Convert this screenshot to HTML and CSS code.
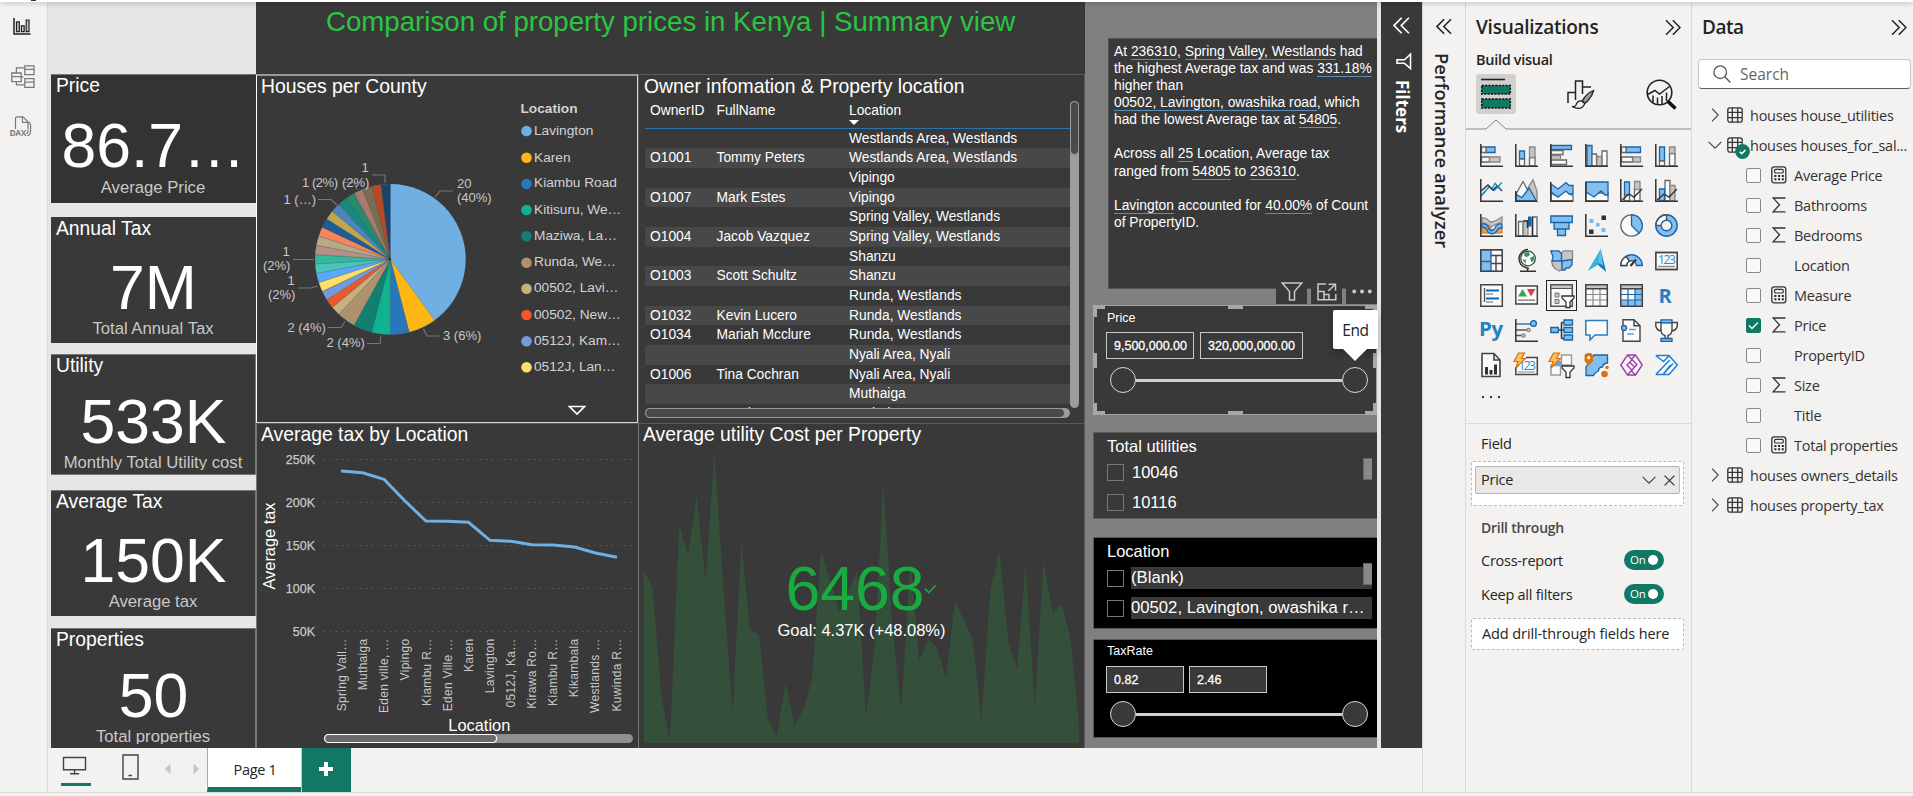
FILE: index.html
```html
<!DOCTYPE html>
<html lang="en">
<head>
<meta charset="utf-8">
<title>Property prices in Kenya</title>
<link rel="stylesheet" href="styles.css">
</head>
<body>
<svg class="defs" width="0" height="0">
  <symbol id="chev-r" viewBox="0 0 8 14"><path d="M1 .7 7.2 7 1 13.3" fill="none" stroke="#444" stroke-width="1.1"/></symbol>
  <symbol id="chev-d" viewBox="0 0 14 8"><path d="M.6 .8 7 7.2 13.4 .8" fill="none" stroke="#444" stroke-width="1.1"/></symbol>
  <symbol id="dbl-r" viewBox="0 0 16 16"><path d="M1 .7 8.2 8 1 15.3M7.8 .7 15 8 7.8 15.3" fill="none" stroke="currentColor" stroke-width="1.5"/></symbol>
  <symbol id="dbl-l" viewBox="0 0 16 16"><path d="M8.2 .7 1 8l7.2 7.3M15 .7 7.8 8l7.2 7.3" fill="none" stroke="currentColor" stroke-width="1.6"/></symbol>
  <symbol id="tbl" viewBox="0 0 16 16"><path d="M3 .8h10a2.2 2.2 0 0 1 2.2 2.2v10a2.2 2.2 0 0 1-2.2 2.2H3A2.2 2.2 0 0 1 .8 13V3A2.2 2.2 0 0 1 3 .8zM5.3 .8v14.4M10.7 .8v14.4M.8 5.3h14.4M.8 10.7h14.4" fill="none" stroke="#333" stroke-width="1.3"/></symbol>
  <symbol id="calc" viewBox="0 0 16 18"><rect x=".8" y=".8" width="14" height="16" rx="2.4" fill="none" stroke="#333" stroke-width="1.3"/><rect x="3.6" y="3.4" width="8.6" height="3.6" rx="1" fill="none" stroke="#333" stroke-width="1.2"/><path d="M3.4 10h9.4M3.4 13.2h9.4" stroke="#222" stroke-width="1.9" stroke-dasharray="2 1.7"/></symbol>
  <symbol id="sigma" viewBox="0 0 14 16"><path d="M13.5 1H1.2l6.3 6.8L1.2 14.9h12.3" fill="none" stroke="#333" stroke-width="1.3"/></symbol>
  <defs>
    <path id="w1" d="M0 0V-75.3A75.3 75.3 0 0 1 9.44 -74.71z"/>
    <path id="w2" d="M0 0V-75.3A75.3 75.3 0 0 1 18.73 -72.93z"/>
    <path id="w3" d="M0 0V-75.3A75.3 75.3 0 0 1 27.72 -70.01z"/>
  </defs>
</svg>

<div class="top-strip"><i></i></div>
<div class="app">
  <nav class="rail">
    <svg width="18" height="18" viewBox="0 0 18 18"><path d="M1 0v16h16.5" fill="none" stroke="#222" stroke-width="1.5"/><path d="M3.5 3.8h2.8v9.9H3.5zM8.4 7.8h2.8v5.9H8.4zM13.2 2h2.8v11.7h-2.8z" fill="#c8c6c4" stroke="#222" stroke-width="1.2"/></svg>
    <svg width="24" height="24" viewBox="0 0 24 24"><path d="M.8 8h9.4v8.6H.8zM.8 11.6h9.4M13.8 .8h9.2v8.8h-9.2zM13.8 4.4h9.2M13.8 13.6h9.2v8.8h-9.2zM13.8 17.2h9.2M5.4 8V2.8h8.4M10.2 12h2M5.4 16.6v3.2h8.4" fill="none" stroke="#7d7b79" stroke-width="1.3"/></svg>
    <svg width="22" height="22" viewBox="0 0 22 22"><path d="M5.5 13V2.4Q5.5 .8 7 .8h6l5 5V15q0 3-2.6 3M12.4 .8v5.6h5.4M18.8 6q1.8 1.2 1.8 3.4v5.8q0 4-3.6 4.6" fill="none" stroke="#7d7b79" stroke-width="1.2"/><text x="-.5" y="20.4" font-size="8.6" font-weight="700" fill="#7d7b79" font-family="Open Sans, sans-serif" textLength="17" stroke="#f3f2f1" stroke-width="1.6" paint-order="stroke">DAX</text></svg>
  </nav>

  <div class="center">
    <div class="report">
      <section class="cards">
        <article class="card price"><h3>Price</h3><b>86.7…</b><span>Average Price</span></article>
        <article class="card annual"><h3>Annual Tax</h3><b>7M</b><span>Total Annual Tax</span></article>
        <article class="card utility"><h3>Utility</h3><b>533K</b><span>Monthly Total Utility cost</span></article>
        <article class="card avgtax"><h3>Average Tax</h3><b>150K</b><span>Average tax</span></article>
        <article class="card props"><h3>Properties</h3><b>50</b><span>Total properties</span></article>
      </section>

      <section class="main">
        <h1>Comparison of property prices in Kenya | Summary view</h1>
        <div class="panel houses">
          <h2>Houses per County</h2>
          <svg width="380" height="324" viewBox="257 98 380 324">
            <g class="pie" transform="translate(390.4 259.3)">
              <circle r="75.3" fill="#6fafe1"/>
              <use href="#w3" fill="#fdb714" transform="rotate(144)"/>
              <use href="#w2" fill="#2777bd" transform="rotate(165.6)"/>
              <use href="#w2" fill="#11b292" transform="rotate(180)"/>
              <use href="#w2" fill="#128070" transform="rotate(194.4)"/>
              <use href="#w2" fill="#ae916f" transform="rotate(208.8)"/>
              <use href="#w1" fill="#c4b17c" transform="rotate(223.2)"/>
              <use href="#w1" fill="#f15829" transform="rotate(230.4)"/>
              <use href="#w1" fill="#739cd8" transform="rotate(237.6)"/>
              <use href="#w1" fill="#ffe066" transform="rotate(244.8)"/>
              <use href="#w1" fill="#5ca8ff" transform="rotate(252)"/>
              <use href="#w1" fill="#4ac5bb" transform="rotate(259.2)"/>
              <use href="#w1" fill="#35b899" transform="rotate(266.4)"/>
              <use href="#w1" fill="#b59088" transform="rotate(273.6)"/>
              <use href="#w1" fill="#b8a888" transform="rotate(280.8)"/>
              <use href="#w1" fill="#f5865b" transform="rotate(288)"/>
              <use href="#w1" fill="#1d5c96" transform="rotate(295.2)"/>
              <use href="#w1" fill="#bea64f" transform="rotate(302.4)"/>
              <use href="#w1" fill="#4d84c0" transform="rotate(309.6)"/>
              <use href="#w1" fill="#18897f" transform="rotate(316.8)"/>
              <use href="#w1" fill="#2a8a6b" transform="rotate(324)"/>
              <use href="#w1" fill="#a97a6c" transform="rotate(331.2)"/>
              <use href="#w1" fill="#7a6c4f" transform="rotate(338.4)"/>
              <use href="#w1" fill="#b54a27" transform="rotate(345.6)"/>
              <use href="#w1" fill="#1a446c" transform="rotate(352.8)"/>
            </g>
            <g class="leader">
              <path d="M435 197.500l5-6.500h13M372 175h13v8M342 182.500h12l3 7M318 199.500h13l6 5.500M293 259.500h21M298 288h13l7-2M328 327.500h13l4-6M367 343.500h13l1-8M423.500 329l3.500 7h13"/>
            </g>
            <g class="lbl">
              <text x="457" y="188">20</text><text x="457" y="202">(40%)</text>
              <text x="361.500" y="172">1</text><text x="342" y="186.500">(2%)</text>
              <text x="302" y="187" textLength="36">1 (2%)</text><text x="283.500" y="203.500">1 (…)</text>
              <text x="282.500" y="256">1</text><text x="263" y="270">(2%)</text>
              <text x="287.500" y="285">1</text><text x="268" y="299">(2%)</text>
              <text x="287.500" y="332">2 (4%)</text><text x="326.500" y="347">2 (4%)</text><text x="443" y="340">3 (6%)</text>
            </g>
            <g class="legend">
              <text x="520.500" y="112.500" font-weight="700">Location</text>
              <circle cx="526.500" cy="131" r="5.300" fill="#6fafe1"/><text x="534" y="135">Lavington</text>
              <circle cx="526.500" cy="157.700" r="5.300" fill="#fdb714"/><text x="534" y="162">Karen</text>
              <circle cx="526.500" cy="184" r="5.300" fill="#2777bd"/><text x="534" y="187">Kiambu Road</text>
              <circle cx="526.500" cy="210" r="5.300" fill="#11b292"/><text x="534" y="214">Kitisuru, We…</text>
              <circle cx="526.500" cy="236.300" r="5.300" fill="#128070"/><text x="534" y="240">Maziwa, La…</text>
              <circle cx="526.500" cy="262.700" r="5.300" fill="#ae916f"/><text x="534" y="266">Runda, We…</text>
              <circle cx="526.500" cy="288.700" r="5.300" fill="#c4b17c"/><text x="534" y="292">00502, Lavi…</text>
              <circle cx="526.500" cy="315" r="5.300" fill="#f15829"/><text x="534" y="319">00502, New…</text>
              <circle cx="526.500" cy="341.300" r="5.300" fill="#739cd8"/><text x="534" y="345">0512J, Kam…</text>
              <circle cx="526.500" cy="367.300" r="5.300" fill="#ffe066"/><text x="534" y="371">0512J, Lan…</text>
            </g>
            <path d="M569.500 406.500h15l-7.500 7.500z" fill="none" stroke="#fff" stroke-width="1.700"/>
          </svg>
        </div>

        <div class="panel owners">
          <h2>Owner infomation &amp; Property location</h2>
          <div class="grid-wrap">
            <div class="tview">
              <div class="tr th"><span>OwnerID</span><span>FullName</span><span>Location<i class="sort"></i></span></div>
              <div class="tr"><span></span><span></span><span>Westlands Area, Westlands</span></div>
              <div class="tr alt"><span>O1001</span><span>Tommy Peters</span><span>Westlands Area, Westlands</span></div>
              <div class="tr"><span></span><span></span><span>Vipingo</span></div>
              <div class="tr alt"><span>O1007</span><span>Mark Estes</span><span>Vipingo</span></div>
              <div class="tr"><span></span><span></span><span>Spring Valley, Westlands</span></div>
              <div class="tr alt"><span>O1004</span><span>Jacob Vazquez</span><span>Spring Valley, Westlands</span></div>
              <div class="tr"><span></span><span></span><span>Shanzu</span></div>
              <div class="tr alt"><span>O1003</span><span>Scott Schultz</span><span>Shanzu</span></div>
              <div class="tr"><span></span><span></span><span>Runda, Westlands</span></div>
              <div class="tr alt"><span>O1032</span><span>Kevin Lucero</span><span>Runda, Westlands</span></div>
              <div class="tr"><span>O1034</span><span>Mariah Mcclure</span><span>Runda, Westlands</span></div>
              <div class="tr alt"><span></span><span></span><span>Nyali Area, Nyali</span></div>
              <div class="tr"><span>O1006</span><span>Tina Cochran</span><span>Nyali Area, Nyali</span></div>
              <div class="tr alt"><span></span><span></span><span>Muthaiga</span></div>
              <div class="tr"><span>O1030</span><span>Jared</span><span>Muthaiga</span></div>
            </div>
            <div class="vscroll"><i></i></div>
            <div class="hscroll"><i></i></div>
          </div>
        </div>

        <div class="panel linechart">
          <h2>Average tax by Location</h2>
          <svg width="381" height="300" viewBox="257 448 381 300">
            <path class="dots" d="M324 459.500h309M324 502.500h309M324 545.500h309M324 588.500h309M324 631.500h309"/>
            <g class="ylab" text-anchor="end">
              <text x="315" y="464">250K</text><text x="315" y="507">200K</text><text x="315" y="550">150K</text><text x="315" y="593">100K</text><text x="315" y="636">50K</text>
            </g>
            <polyline points="341,471 362.500,472.700 384,479.300 405,501 426,521 447.500,521.300 468.500,522.300 490,540.300 511,541.300 532,544.700 553,545 574.500,547 595.500,553 617,557.300" fill="none" stroke="#6fafe1" stroke-width="3"/>
            <g class="xlab" text-anchor="end">
              <text transform="translate(346 638.500) rotate(-90)">Spring Vall…</text>
              <text transform="translate(367 638.500) rotate(-90)">Muthaiga</text>
              <text transform="translate(388 638.500) rotate(-90)">Eden ville, …</text>
              <text transform="translate(409 638.500) rotate(-90)">Vipingo</text>
              <text transform="translate(431 638.500) rotate(-90)">Kiambu R…</text>
              <text transform="translate(452 638.500) rotate(-90)">Eden Ville …</text>
              <text transform="translate(473 638.500) rotate(-90)">Karen</text>
              <text transform="translate(494 638.500) rotate(-90)">Lavington</text>
              <text transform="translate(515 638.500) rotate(-90)">0512J, Ka…</text>
              <text transform="translate(536 638.500) rotate(-90)">Kirawa Ro…</text>
              <text transform="translate(557 638.500) rotate(-90)">Kiambu R…</text>
              <text transform="translate(578 638.500) rotate(-90)">Kikambala</text>
              <text transform="translate(599 638.500) rotate(-90)">Westlands …</text>
              <text transform="translate(621 638.500) rotate(-90)">Kuwinda R…</text>
            </g>
            <g class="axis-title" text-anchor="middle">
              <text x="479.300" y="730.500" textLength="62">Location</text>
              <text transform="translate(274.500 546) rotate(-90)" textLength="87">Average tax</text>
            </g>
            <rect x="324" y="734" width="309" height="9" rx="4.500" fill="#8f8f8f"/>
            <rect x="324.600" y="734.500" width="172" height="8" rx="4" fill="#6a6a6a" stroke="#fff" stroke-width="1.200"/>
          </svg>
        </div>

        <div class="panel kpi">
          <h2>Average utility Cost per Property</h2>
          <svg width="445" height="300" viewBox="639 448 445 300">
            <polygon transform="translate(640 420) scale(.33333)" fill="#34503a" points="11,453 38,502 64,830 90,966 118,312 144,408 170,228 197,485 223,95 250,500 278,882 304,362 330,631 357,645 384,898 410,947 437,788 464,916 491,867 517,772 543,390 570,480 598,575 625,520 651,450 678,890 704,680 730,185 757,620 784,872 811,415 838,722 865,657 891,682 918,776 945,545 971,598 998,658 1024,902 1051,512 1078,395 1105,665 1131,748 1157,428 1184,857 1211,425 1238,578 1265,552 1291,655 1317,915 1317,969 11,969"/>
            <text x="785.500" y="610" font-size="62.500" fill="#1aab40" textLength="139">6468</text>
            <path d="M925 588.500l3.600 4 7.400-7.200" fill="none" stroke="#1aab40" stroke-width="1.600"/>
            <text x="777.500" y="636" font-size="16.500" fill="#fff" textLength="168">Goal: 4.37K (+48.08%)</text>
          </svg>
        </div>
      </section>

      <section class="side">
        <div class="story">
          <p>At <u>236310</u>, <u>Spring Valley, Westlands</u> had<br>the highest Average tax and was <u>331.18%</u><br>higher than<br><u>00502, Lavington, owashika road</u>, which<br>had the lowest Average tax at <u>54805</u>.</p>
          <p>Across all <u>25</u> Location, Average tax<br>ranged from <u>54805</u> to <u>236310</u>.</p>
          <p><u>Lavington</u> accounted for <u>40.00%</u> of Count<br>of PropertyID.</p>
        </div>
        <div class="slicer price-slicer">
          <div class="actions">
            <span><svg width="22" height="20" viewBox="0 0 22 20"><path d="M1.200 1h19.600l-7.300 8.500V18h-5V9.500z" fill="none" stroke="#c8c8c8" stroke-width="1.500"/></svg></span>
            <span><svg width="20" height="18" viewBox="0 0 20 18"><path d="M9 1H1v15.800h17.800V11M11.500 1.200h7v6.600M18.300 1.200l-7 6.800M1 8.500h6v8.300M7 11.500h5v5.300" fill="none" stroke="#c8c8c8" stroke-width="1.500"/></svg></span>
            <span><svg width="20" height="5" viewBox="0 0 20 5"><path d="M2.200 2.500h.01M10 2.500h.01M17.800 2.500h.01" stroke="#c8c8c8" stroke-width="4" stroke-linecap="round"/></svg></span>
          </div>
          <i class="h tl"></i><i class="h tm"></i><i class="h tr2"></i><i class="h ml"></i><i class="h mr"></i><i class="h bl"></i><i class="h bm"></i><i class="h br"></i>
          <h4>Price</h4>
          <div class="inputs"><span class="w88">9,500,000.00</span><span class="w102">320,000,000.00</span></div>
          <div class="slider"><i></i><em></em><i></i></div>
          <div class="tip">End</div>
        </div>
        <div class="slicer list util">
          <h5>Total utilities</h5>
          <div class="opt"><i></i><span>10046</span></div>
          <div class="opt"><i></i><span>10116</span></div>
          <b class="thumb"></b>
        </div>
        <div class="slicer list loc">
          <h5>Location</h5>
          <div class="opt"><i></i><span>(Blank)</span></div>
          <div class="opt"><i></i><span>00502, Lavington, owashika r…</span></div>
          <b class="thumb"></b>
        </div>
        <div class="slicer rate">
          <h4>TaxRate</h4>
          <div class="inputs"><span class="w78">0.82</span><span class="w78">2.46</span></div>
          <div class="slider"><i></i><em></em><i></i></div>
        </div>
      </section>

      <aside class="filters">
        <svg width="17" height="17"><use href="#dbl-l"/></svg>
        <svg class="fun" width="16" height="17" viewBox="0 0 16 17"><path d="M14.500 1.200v14.300L8.500 10.300H1V6.800h7.500z" fill="none" stroke="#fff" stroke-width="1.600"/></svg>
        <span>Filters</span>
      </aside>
    </div>

    <footer class="pages">
      <div class="ic desk"><svg width="26" height="20" viewBox="0 0 26 20"><path d="M1.500 1.500h22v12.300h-22zM12.500 14v3.500M8 17.700h9" fill="none" stroke="#444" stroke-width="1.400"/></svg></div>
      <svg class="ic phone" width="17" height="26" viewBox="0 0 17 26"><path d="M1 1h15v24H1zM6.500 21.500h3.500" fill="none" stroke="#444" stroke-width="1.400"/></svg>
      <svg class="ic prev" width="7" height="12" viewBox="0 0 7 12"><path d="M6.500 .5v11L.8 6z" fill="#c8c6c4"/></svg>
      <svg class="ic next" width="7" height="12" viewBox="0 0 7 12"><path d="M.5 .5v11L6.200 6z" fill="#c8c6c4"/></svg>
      <div class="tab">Page 1</div>
      <div class="plus"><svg width="14" height="14" viewBox="0 0 14 14"><path d="M7 0v14M0 7h14" stroke="#fff" stroke-width="4"/></svg></div>
    </footer>
  </div>

  <aside class="perf"><svg width="16" height="17"><use href="#dbl-l"/></svg><span>Performance analyzer</span></aside>

  <aside class="viz">
    <header><h2>Visualizations</h2><svg width="16" height="17"><use href="#dbl-r"/></svg></header>
    <h3>Build visual</h3>
    <div class="modes">
      <div class="mode on"><svg width="32" height="32" viewBox="0 0 32 32"><path d="M1 1.500h24" stroke="#222" stroke-width="1.600"/><path d="M1.700 7.500h28.600v8.600H1.700zM1.700 21h28.600v9H1.700z" fill="#117865" stroke="#111" stroke-width="1.500" stroke-dasharray="2.200 1.200"/></svg></div>
      <svg width="28" height="30" viewBox="0 0 28 30"><path d="M1 24V13.500h7.500M8.500 20V2h7v13M15.500 8h8.500M8.500 13v8" fill="none" stroke="#222" stroke-width="1.500"/><path d="M26.600 11.500q-5.600 2-9.600 7.600l-1.800 3 2.600 2.200 3-2.400q4.400-4.600 5.800-10.400z" fill="#999" stroke="#222" stroke-width="1.300"/><path d="M14.500 22q-4-.5-5.500 4-1 2-4 1.500 6.500 3.500 10.500.5 2.400-1.800 2-3.800z" fill="#f3f2f1" stroke="#222" stroke-width="1.300"/></svg>
      <svg width="31" height="31" viewBox="0 0 31 31"><circle cx="13.500" cy="13.500" r="12.300" fill="none" stroke="#222" stroke-width="1.600"/><path d="M1.500 15.500 9 11.500l4.500 3.500 10-7.500M7 16.500v7M11.500 18.500v7M16 17v8M20.500 13.500v8.500" fill="none" stroke="#222" stroke-width="1.500"/><path d="m21.500 22 8 7.500" stroke="#111" stroke-width="3.600"/></svg>
    </div>
    <svg class="notch" width="225" height="11" viewBox="0 0 225 11"><path d="M0 10h20L30 1l10 9h185" fill="none" stroke="#8a8886" stroke-width="1"/></svg>

    <div class="icons">
      <svg viewBox="0 0 23 23"><path class="b" d="M6 3h9v5.500H6z"/><path class="w" d="M1.500 3H6v5.500H1.500zM1.500 13h8v5h-8z"/><path class="g" d="M9.500 13H20v5H9.500z"/><path class="ax" d="M.8 0v22.200H23"/></svg>
      <svg viewBox="0 0 23 23"><path class="b" d="M4.500 7h5v8h-5z"/><path class="w" d="M4.500 15h5v7h-5zM14.500 13.500h5.500V22h-5.500z"/><path class="g" d="M14.500 3h5.500v10.500h-5.500z"/><path class="ax" d="M.8 0v22.200H23"/></svg>
      <svg viewBox="0 0 23 23"><path class="b" d="M1 1.500h20.500v4H1z"/><path class="w" d="M1 6.500h12v4H1zM1 16h15.500v4.500H1z"/><path class="g" d="M1 11.500h9.500v4H1z"/><path class="ax" d="M.8 0v22.200H23"/></svg>
      <svg viewBox="0 0 23 23"><path class="b" d="M2 1.500h5V22H2z"/><path class="w" d="M7 10h4.500v12H7zM17 7h5v15h-5z"/><path class="g" d="M12 12.500h4.500V22H12z"/><path class="ax" d="M.8 0v22.200H23"/></svg>
      <svg viewBox="0 0 23 23"><path class="b" d="M6 3h14.500v5.500H6z"/><path class="w" d="M1.500 3H6v5.500H1.500zM1.500 13h11v5h-11z"/><path class="g" d="M13 13h7.500v5H13z"/><path class="ax" d="M.8 0v22.200H23"/></svg>
      <svg viewBox="0 0 23 23"><path class="b" d="M4.500 3h5v14h-5z"/><path class="w" d="M4.500 17h5v5h-5zM14.500 9.500h5.500V22h-5.500z"/><path class="g" d="M14.500 3h5.500v6.500h-5.500z"/><path class="ax" d="M.8 0v22.200H23"/></svg>

      <svg viewBox="0 0 23 23"><path d="M1 17 9 8l5 3.500 8-8" class="l" stroke="#1e8bcd"/><path d="m1 12 7-6 5 5 4-4 5 5" class="l" stroke="#333"/><path d="m1 17 5-5.500M12 9.500 15 4.500l7 7" class="l" stroke="#1e8bcd"/><path class="ax" d="M.8 0v22.200H23"/></svg>
      <svg viewBox="0 0 23 23"><path class="g" d="M11 12 18 .8 22 12v10.500z"/><path class="w" d="M1 15 8 2.500l5 9.500-6 8z"/><path class="b" d="M1 22v-6.500l6 3 7-9.500 7.500 13z"/><path class="ax" d="M.8 12v10.200H22"/></svg>
      <svg viewBox="0 0 23 23"><path class="w" d="M1 22v-8l7 4 7-7 8 6v5z"/><path class="b" d="m1 5 7 5 8-6.500 3 3h4v8.500h-4l-3-3-8 6-7-5z"/><path class="ax" d="M.8 3v19.200H23"/></svg>
      <svg viewBox="0 0 23 23"><path class="w" d="M1 22v-8h22v8z"/><path class="b" d="M1 3h22v13h-3l-4-4-7 6-8-5z"/><path class="ax" d="M.8 3v19.200H23"/></svg>
      <svg viewBox="0 0 23 23"><path class="b" d="M4.500 3h5v13h-5z"/><path class="w" d="M4.500 16h5v6h-5zM14.500 9.500h5.500V22h-5.500z"/><path class="g" d="M14.500 2.500h5.500v8h-5.500z"/><path d="m2 21 7-6 5 3 8-8" class="l" stroke="#333"/><path class="ax" d="M.8 0v22.200H23"/></svg>
      <svg viewBox="0 0 23 23"><path class="w" d="M10 1.500h5V22h-5z"/><path class="g" d="M15 6.500h5V22h-5z"/><path class="b" d="M4.500 10h5v12h-5z"/><path d="m2 21 7-6 5 3 8-8" class="l" stroke="#333"/><path class="ax" d="M.8 0v22.200H23"/></svg>

      <svg viewBox="0 0 23 23"><path d="M2 4q4-1 8 4 5 0 12-5v5q-6 2-11 5-5-4-9-4z" class="g"/><path d="M2 12q6-3 9 3 4 2 11-2v6H2z" fill="#f0a04b" stroke="#d66f0b"/><path d="M2 10q5-1 7 5 3 4 6-1 2-5 7-4v4q-4-1-5 3-5 5-9 1-2-5-6-5z" class="b"/><path class="ax" d="M.8 0v22.200H23"/></svg>
      <svg viewBox="0 0 23 23"><path class="w" d="M3.500 7.500h4.500V22H3.500zM17.500 3h4.500v19h-4.500z"/><path class="g" d="M8.500 7h4.500v15H8.500z"/><path d="M13 2.500h3.500v10H13z" fill="#1565a8"/><path class="ax" d="M.8 0v22.200H23M8.500 7h4v7M17.500 3v19"/></svg>
      <svg viewBox="0 0 23 23"><path class="b" d="M.8 2h21.500v6.500H.8zM4 8.500h15v6.500H4zM7.500 15h8v6.500h-8z"/></svg>
      <svg viewBox="0 0 23 23"><path d="M16.500 1.500H21V6h-4.500zM4 15.500h4.500V20H4z" fill="#333"/><path d="M4.500 5h4v4h-4zM11 9h3.500v3.500H11zM16.500 14h4v4h-4z" fill="#7ab8e8"/><path class="ax" d="M.8 0v22.200H23"/></svg>
      <svg viewBox="0 0 23 23"><circle cx="11.500" cy="11.500" r="10.700" class="w"/><path class="b" d="M11.500 .8a10.700 10.700 0 0 1 7.500 18.300l-7.500-7.600z"/></svg>
      <svg viewBox="0 0 23 23"><circle cx="11.500" cy="11.500" r="8" fill="none" stroke="#85bdec" stroke-width="5.500"/><path d="M3.500 11.500a8 8 0 0 1 8-8" fill="none" stroke="#fafafa" stroke-width="5"/><circle cx="11.500" cy="11.500" r="10.700" class="l" stroke="#1765ab"/><circle cx="11.500" cy="11.500" r="5.300" class="l" stroke="#1765ab"/><path d="M.8 11.500A10.700 10.700 0 0 1 11.500 .8v5.400M.8 11.500h5.500" class="l" stroke="#555"/></svg>

      <svg viewBox="0 0 23 23"><path class="w" d="M.8 .8h21.500v21.500H.8z"/><path class="b" d="M.8 .8H11v21.500H.8zM.8 12.500H11"/><path class="l" stroke="#444" d="M11 6.500h11M16 6.500v15.700M16 14.500h6M11 14.500h5M.8 .8h21.500v21.500H.8z"/></svg>
      <svg viewBox="0 0 23 23"><circle cx="13" cy="9.500" r="7.300" fill="#fff" stroke="#444" stroke-width="1.300"/><path d="M10 3.500l4-.5 1 3-3 2-3-1zM15 9l4-2v4l-2.500 2.500zM7 10l4 1-.500 4z" fill="#2f9a55"/><path class="ax" d="M13 .5a9.500 9.500 0 0 0-9 9.500q.500 8 10 9.500M12.500 18.500v3.500M5 22.200h16"/></svg>
      <svg viewBox="0 0 23 23"><path class="g" d="M11.500 3.500 14 1.800h8.500V10l-4 2h-7zM2 12h9.500l1 8-3 2-4.500-2.500q-3.500-3-3-7.500z"/><path class="b" d="M.8 1.800h8l2.700 3v7H2l1-4zM12 12l10-1.500V16l-3 3h-3l-1 2h-3z"/></svg>
      <svg viewBox="0 0 23 25"><path d="M16 0 2 24l11-7z" fill="#3bb0dd"/><path d="m16 0-3 17 9 8z" fill="#1077c9"/><path d="m16 0 3 18-6-3z" fill="#5bc3e6"/></svg>
      <svg viewBox="0 0 23 23"><path d="M.8 16.500a10.700 10.700 0 0 1 21.500 0h-6a4.700 4.700 0 0 0-9.500 0z" fill="#85bdec" stroke="#1765ab" stroke-width="1.400"/><path d="M.8 16.500q0-6 5.500-9l3 4.500q-2.500 1.500-2.500 4.500z" fill="#fff" stroke="#444" stroke-width="1.400"/><path d="m10.500 17 5.500-6.500" stroke="#333" stroke-width="2"/></svg>
      <svg viewBox="0 0 23 23"><path class="w" d="M.8 3.500h21.500v17H.8z"/><text x="3" y="14.500" font-size="12" fill="#2b8ad0" font-family="Open Sans" textLength="17.500">123</text><path d="M3 17.500h17" class="l" stroke="#888"/><path d="M.8 3.500h21.500v17H.8z" class="l" stroke="#444"/></svg>

      <svg viewBox="0 0 23 23"><path d="M.8 .8h21.500v21.500H.8z" fill="#fafafa" stroke="#444" stroke-width="1.500"/><path d="M4.500 4v14" stroke="#555" stroke-width="1.400"/><path d="M6 6.500h13M6 14.500h13" stroke="#1068b5" stroke-width="2"/><path d="M6 10h7M6 18h7" stroke="#999" stroke-width="1.500"/></svg>
      <svg viewBox="0 0 23 23"><path d="M.8 2h21.500v18H.8z" fill="#fafafa" stroke="#444" stroke-width="1.500"/><path d="M3 12.500 7.500 5l4.500 7.500z" fill="#3da35a"/><path d="M12 5h8.500L16 12.500z" fill="#e23c3c"/><path d="M3 16.200h17" stroke="#888" stroke-width="1.500"/></svg>
      <svg class="sel" viewBox="0 0 23 23"><path d="M.8 .8h21.500v21.500H.8z" fill="#fafafa" stroke="#555" stroke-width="1.500"/><path d="M1 1h21v3.500H1z" fill="#c8c6c4" stroke="#555"/><path d="M5 9h4v4H5zM5 15.500h4v4H5z" fill="#c8c6c4" stroke="#777"/><path d="M12 12h12v2l-4 4v5.500h-4V18l-4-4z" fill="#fff" stroke="#333" stroke-width="1.300"/></svg>
      <svg viewBox="0 0 23 23"><path d="M.8 .8h21.500v21.500H.8z" fill="#fafafa"/><path d="M1 1h21v3.500H1z" fill="#c8c6c4"/><path d="M1 10.500h21M1 16h21M8 5v17M15 5v17" stroke="#888" stroke-width="1.200"/><path d="M.8 .8h21.500v21.500H.8zM1 4.800h21" fill="none" stroke="#444" stroke-width="1.500"/></svg>
      <svg viewBox="0 0 23 23"><path d="M.8 .8h21.500v21.500H.8z" fill="#fafafa"/><path d="M1 1h21v3.500H1z" fill="#c8c6c4"/><path d="M15 5h7v17H1v-6h14z" fill="#85bdec"/><path d="M1 10.500h21M1 16h21M8 5v17M15 5v17" stroke="#1765ab" stroke-width="1.200"/><path d="M.8 .8h21.500v21.500H.8zM1 4.800h21" fill="none" stroke="#444" stroke-width="1.500"/></svg>
      <svg viewBox="0 0 23 23"><text x="3.500" y="18.500" font-size="20" font-weight="700" fill="#2480c0" font-family="Open Sans" textLength="13" lengthAdjust="spacingAndGlyphs">R</text></svg>

      <svg viewBox="0 0 23 23"><text x="-1" y="16.500" font-size="20" font-weight="700" fill="#2480c0" font-family="Open Sans" textLength="24" lengthAdjust="spacingAndGlyphs">Py</text></svg>
      <svg viewBox="0 0 23 23"><path d="M1 5h15" stroke="#1765ab" stroke-width="1.300"/><circle cx="18.500" cy="4.500" r="2.900" class="b"/><path d="M1 11h11M1 16.500h6" stroke="#555" stroke-width="1.300"/><circle cx="13.500" cy="11" r="1.700" class="g"/><circle cx="8.500" cy="16.500" r="1.700" class="g"/><path class="ax" d="M.8 0v22.200H23"/></svg>
      <svg viewBox="0 0 23 23"><path class="ax" d="M8 11h6M11.500 3.500v16M11.500 3.500H14M11.500 19.500H14"/><path class="b" d="M.8 8.500h7.500v5H.8zM14 1h8.500v5H14zM14 8.500h8.500v5H14zM14 16h8.500v5H14z"/></svg>
      <svg viewBox="0 0 23 23"><path d="M.8 1.500h21.500v14.500H10L5 21v-5H.8z" fill="#fafafa" stroke="#2b7cc0" stroke-width="1.500"/></svg>
      <svg viewBox="0 0 23 23"><path d="M3 6V.8h11l6 6v15.500H3V11M14 .8v6h6" fill="#fafafa" stroke="#444" stroke-width="1.400"/><circle cx="4" cy="9" r="2.500" class="b"/><path d="M9 10.500h7M7 15h7" stroke="#5aa7e0" stroke-width="1.300"/></svg>
      <svg viewBox="0 0 23 23"><path d="M6 3.500H.8V7q1 4.500 5.500 5M17 3.500h5.300V7q-1 4.500-5.500 5M6 3.500v7q0 5 4 6v3h3v-3q4-1 4-6v-7z" fill="#fafafa" stroke="#444" stroke-width="1.400"/><path class="b" d="M6 .8h11v3H6zM6 19.500h11v2.800H6z"/></svg>

      <svg viewBox="0 0 23 23"><path d="M2 -.5h12l6 6.500v16.500H2zM14 -.5v6.500h6" fill="#fafafa" stroke="#444" stroke-width="1.600"/><path d="M5 13h3v7.500H5zM9.500 16h3v4.500h-3zM14 10.500h3v10h-3z" fill="#333"/></svg>
      <svg viewBox="0 1 23 23"><path d="M11 4.500h11.300v17H.8V14" fill="#fafafa" stroke="#444" stroke-width="1.500"/><text x="3.500" y="16.500" font-size="12" fill="#2b8ad0" font-family="Open Sans" textLength="17">123</text><path d="M3 19h17" stroke="#888"/><path d="M3.500 0h6L6.500 5.500h4L1 15l2-6.500H-1z" fill="#fbc15e" stroke="#d66f0b" stroke-width="1.200"/></svg>
      <svg viewBox="0 1 23 23"><path d="M11.500 2h10v10h-10zM1 12.500h9.500V22H1z" fill="#fafafa" stroke="#999" stroke-width="1.400"/><path d="M7 8h4v4H5z" fill="#5aa7e0"/><path d="M3.500 0h6L6.500 5.500h4L1 15l2-6.500H-1z" fill="#fbc15e" stroke="#d66f0b" stroke-width="1.200"/><path d="M12 13h12v2l-4 4v5.500h-4V19l-4-4z" fill="#fff" stroke="#333" stroke-width="1.300"/></svg>
      <svg viewBox="0 1 23 23"><path d="M1 2h21.500v21H1z" fill="#fafafa"/><path class="b" d="M9 2h13.500v8q-4 0-5 4-4 0-4 4-3 1-5 4.500H1V14z"/><path d="M4 0Q8-.500 8 4v4l-4.500 5L-.500 8V3q0-3 4.500-3z" fill="#d9730d"/><circle cx="3.700" cy="4.700" r="1.600" fill="#fff"/><circle cx="19.500" cy="21" r="3.300" fill="#d9730d"/><circle cx="22" cy="14.500" r="1.800" fill="#d9730d"/></svg>
      <svg viewBox="0 1 23 23"><path d="M7.500 2h8l6.700 10-6.700 10h-8L.8 12z" fill="#fdf6fd" stroke="#9b3fa5" stroke-width="1.400"/><path d="m7.500 2 9.500 9.500L7.500 22M15.500 2 11 6.700M15.500 22 11 17.500M12 7l-5 5 5 5.200M10 9.500l5 5" fill="none" stroke="#9b3fa5" stroke-width="1.400"/></svg>
      <svg viewBox="0 1 23 23"><path d="M.8 2.500H14l8 9-8 10H.8l7.500-9.500z" fill="#fafafa"/><path d="M.8 2.500H14l8.300 9.500-8.300 9.500H8L15.500 12M.8 2.500 8.500 8.500 14.500 2.500M.8 21.500 14.800 7M.8 21.500H8l10-11" fill="none" stroke="#1b7fdc" stroke-width="1.500"/></svg>
    </div>
    <div class="more"><i></i><i></i><i></i></div>

    <div class="wells">
      <label>Field</label>
      <div class="well"><div class="pill"><span>Price</span><svg width="14" height="8"><use href="#chev-d"/></svg><svg width="11" height="11" viewBox="0 0 11 11"><path d="M.6 .6l9.800 9.800M10.400 .6.600 10.400" stroke="#333" stroke-width="1.200"/></svg></div></div>
      <label class="drill">Drill through</label>
      <div class="row"><span>Cross-report</span><span class="toggle">On<i></i></span></div>
      <div class="row"><span>Keep all filters</span><span class="toggle">On<i></i></span></div>
      <div class="add">Add drill-through fields here</div>
    </div>
  </aside>

  <aside class="data">
    <header><h2>Data</h2><svg width="16" height="17"><use href="#dbl-r"/></svg></header>
    <div class="search"><svg width="18" height="18" viewBox="0 0 18 18"><circle cx="7.200" cy="7.200" r="6.300" fill="none" stroke="#555" stroke-width="1.300"/><path d="m11.800 11.800 5.600 5.600" stroke="#555" stroke-width="1.400"/></svg><span>Search</span></div>
    <ul class="tree">
      <li class="t"><svg class="cr" width="8" height="14"><use href="#chev-r"/></svg><svg width="16" height="16"><use href="#tbl"/></svg><span>houses house_utilities</span></li>
      <li class="t open"><svg class="cd" width="14" height="8"><use href="#chev-d"/></svg><svg width="16" height="16"><use href="#tbl"/></svg><span>houses houses_for_sal...</span><svg class="badge" width="15" height="15" viewBox="0 0 15 15"><circle cx="7.500" cy="7.500" r="7.400" fill="#117865"/><path d="m4.800 7.700 2 2 3.600-3.700" fill="none" stroke="#fff" stroke-width="1.600"/></svg></li>
      <li class="f"><i></i><svg width="16" height="18"><use href="#calc"/></svg><span>Average Price</span></li>
      <li class="f"><i></i><svg width="16" height="16"><use href="#sigma"/></svg><span>Bathrooms</span></li>
      <li class="f"><i></i><svg width="16" height="16"><use href="#sigma"/></svg><span>Bedrooms</span></li>
      <li class="f"><i></i><svg width="16" height="16"></svg><span>Location</span></li>
      <li class="f"><i></i><svg width="16" height="18"><use href="#calc"/></svg><span>Measure</span></li>
      <li class="f"><i class="on"><svg width="13" height="13" viewBox="0 0 13 13"><path d="m2 6.500 3 3 6-6" fill="none" stroke="#fff" stroke-width="1.300"/></svg></i><svg width="16" height="16"><use href="#sigma"/></svg><span>Price</span></li>
      <li class="f"><i></i><svg width="16" height="16"></svg><span>PropertyID</span></li>
      <li class="f"><i></i><svg width="16" height="16"><use href="#sigma"/></svg><span>Size</span></li>
      <li class="f"><i></i><svg width="16" height="16"></svg><span>Title</span></li>
      <li class="f"><i></i><svg width="16" height="18"><use href="#calc"/></svg><span>Total properties</span></li>
      <li class="t"><svg class="cr" width="8" height="14"><use href="#chev-r"/></svg><svg width="16" height="16"><use href="#tbl"/></svg><span>houses owners_details</span></li>
      <li class="t"><svg class="cr" width="8" height="14"><use href="#chev-r"/></svg><svg width="16" height="16"><use href="#tbl"/></svg><span>houses property_tax</span></li>
    </ul>
  </aside>
</div>
<div class="status"></div>
</body>
</html>
```

FILE: styles.css
```css
* { box-sizing: border-box; margin: 0; padding: 0; }
html { height: 796px; overflow: hidden; }
body { width: 1913px; height: 796px; overflow: hidden; background: #f3f2f1; font-family: "Liberation Sans", Arial, sans-serif; color: #252423; }
svg { display: block; flex: none; overflow: visible; }
.defs { position: absolute; }
h1, h2, h3, h4, h5 { font-weight: 400; }

.top-strip { height: 2px; background: #fff; padding-left: 31px; position: relative; box-shadow: 0 1px 5px rgba(0,0,0,.35); z-index: 5; }
.top-strip i { display: block; width: 5px; height: 1px; background: #333; }
.app { display: flex; height: 790px; }
.status { height: 4px; border-top: 1px solid #dcdad8; }

.rail { width: 48px; border-right: 1px solid #dcdad8; display: flex; flex-direction: column; padding-top: 16px; }
.rail svg:nth-child(1) { margin-left: 13px; }
.rail svg:nth-child(2) { margin: 29px 0 0 11px; }
.rail svg:nth-child(3) { margin: 27px 0 0 10px; }

.center { width: 1374px; display: flex; flex-direction: column; }
.report { height: 746px; display: flex; background: #e6e6e6; }

.cards { width: 208px; padding: 72px 0 0 3px; display: flex; flex-direction: column; }
.card { background: #393939; color: #fff; overflow: hidden; display: flex; flex-direction: column; height: 126px; border-top: 1px solid #777; border-right: 1px solid #777; }
.card h3 { font-size: 19.3px; line-height: 22px; padding-left: 5px; }
.card b { font-weight: 400; font-size: 62.5px; line-height: 64px; text-align: center; margin-top: 15px; padding-left: 1px; white-space: nowrap; }
.card span { font-size: 16.7px; line-height: 20px; color: #c8c8c8; text-align: center; white-space: nowrap; }
.price { height: 129px; background: #333; border-right-color: #333; }
.price b { margin-top: 16px; }
.price span { margin-top: 1px; }
.annual { margin-top: 14px; border-color: #393939; }
.utility { margin-top: 11px; height: 121px; border-bottom: 1px solid #777; }
.avgtax { margin-top: 15px; }
.props { margin-top: 12px; height: 120px; }
.utility b, .props b { margin-top: 12px; }
.utility span, .props span { height: 17px; overflow: hidden; }

.main { width: 829px; display: grid; grid-template-columns: 382px 447px; grid-template-rows: 72px 349px 325px; background: #393939; }
.main h1 { grid-column: 1 / 3; font-size: 27.65px; line-height: 40px; color: #2bc542; padding-left: 70px; white-space: nowrap; }
.panel h2 { font-size: 19.35px; line-height: 20px; height: 22px; color: #fff; white-space: nowrap; }
.houses { border: 1px solid #d8d8d8; border-top: 2px solid #999; border-left-color: #fff; }
.houses h2 { padding-left: 4px; }
.pie use { stroke: rgba(40,40,40,.35); stroke-width: .5px; }
.leader path { fill: none; stroke: #777; stroke-width: 1.100px; }
.lbl text { font-size: 13px; fill: #c8c8c8; }
.legend text { font-size: 13.700px; fill: #d2d2d2; }
.owners { border: 1px solid #5a5a5a; border-bottom: 0; padding: 0 4px 0 6px; }
.panel.owners h2 { margin-left: -1px; line-height: 22px; }
.linechart { border-top: 1px solid #5a5a5a; border-left: 1px solid #777; }
.panel.linechart h2, .panel.kpi h2 { padding: 0 0 0 4px; line-height: 21px; height: 24px; }
.kpi { border-top: 1px solid #5a5a5a; border-left: 1px solid #777; border-right: 1px solid #5a5a5a; }
.dots { fill: none; stroke: #6a6a6a; stroke-width: 1px; stroke-dasharray: 1 5; }
.ylab text { font-size: 12.500px; fill: #c8c8c8; stroke: #c8c8c8; stroke-width: .25px; }
.xlab text { font-size: 12px; fill: #c8c8c8; letter-spacing: .3px; }
.axis-title text { font-size: 16.400px; fill: #fff; }

.grid-wrap { display: grid; grid-template-columns: 425px 10px; grid-template-rows: 311px 10px; }
.tview { overflow: hidden; color: #fff; font-size: 13.800px; }
.tr { display: grid; grid-template-columns: 66.500px 132.500px 1fr; height: 19.700px; line-height: 19px; padding-left: 5px; white-space: nowrap; }
.tr.th { line-height: 27px; border-bottom: 1px solid #2a73b0; height: 31.500px; }
.tr.alt { background: #484848; }
.tr span { position: relative; }
.sort { position: absolute; left: 0; top: 23px; border: 5px solid transparent; border-top-color: #fff; border-bottom: 0; }
.vscroll { background: #9c9c9c; border-radius: 5px; margin: 4px 0 0; width: 9px; }
.vscroll i { display: block; height: 54px; border-radius: 5px; background: #4c4a48; border: 1px solid #999; }
.hscroll { background: #9c9c9c; border-radius: 5px; }
.hscroll i { display: block; width: 420px; height: 10px; border-radius: 5px; background: #4c4a48; border: 1px solid #999; }

.side { width: 292px; background: #808080; border-right: 0; padding-left: 8px; display: flex; flex-direction: column; }
.story { margin: 36px 0 0 15px; height: 251px; background: #393939; border: 1px solid #555; border-right: 0; padding: 4px 0 0 5px; color: #fff; font-size: 13.820px; line-height: 17.100px; white-space: nowrap; }
.story p { margin-bottom: 17px; }
.story u { text-decoration: none; border-bottom: 1px solid #5b8db8; }
.slicer { position: relative; background: #393939; color: #fff; padding-left: 14px; }
.slicer h4 { font-size: 12.500px; line-height: 16px; }
.price-slicer { margin-top: 16px; height: 110px; border: 1px solid #a0a0a0; padding: 4px 0 0 13px; }
.price-slicer .inputs { margin-top: 6px; }
.actions { position: absolute; right: -1px; top: -24px; display: flex; gap: 4px; }
.actions span { width: 31px; height: 22px; background: #393939; display: flex; align-items: center; justify-content: center; padding-bottom: 3px; }
.h { position: absolute; border: 0 solid #a8a8a8; }
.tl, .tr2, .bl, .br { width: 12px; height: 12px; }
.tl { left: -1px; top: -1px; border-top-width: 4px; border-left-width: 4px; }
.tr2 { right: -1px; top: -1px; border-top-width: 4px; border-right-width: 4px; }
.bl { left: -1px; bottom: -1px; border-bottom-width: 4px; border-left-width: 4px; }
.br { right: -1px; bottom: -1px; border-bottom-width: 4px; border-right-width: 4px; }
.tm, .bm { left: 134px; width: 15px; border-top-width: 4px; }
.tm { top: -1px; } .bm { bottom: -1px; }
.ml, .mr { top: 47px; height: 15px; border-left-width: 4px; }
.ml { left: -1px; } .mr { right: -1px; }
.inputs { display: flex; gap: 5px; margin-left: -1px; }
.inputs span { height: 27px; border: 1px solid #c8c8c8; background: #393939; font-size: 12.500px; line-height: 27px; padding-left: 7px; white-space: nowrap; -webkit-text-stroke: .3px #fff; }
.w88 { width: 88px; } .w102 { width: 103px; margin-left: 1px; } .w78 { width: 78px; }
.slider { display: flex; align-items: center; margin: 8px 0 0 3px; }
.slider i { width: 26px; height: 26px; border: 1.500px solid #d8d8d8; border-radius: 50%; background: #393939; }
.slider em { width: 206px; height: 3px; background: #d0d0d0; }
.tip { position: absolute; left: 239px; top: 4px; width: 45px; height: 39px; background: #fff; border-radius: 2px; color: #222; font: 15.500px/40px "Open Sans", sans-serif; letter-spacing: -.4px; text-align: center; box-shadow: 0 3px 8px rgba(0,0,0,.3); z-index: 3; }
.tip::after { content: ""; position: absolute; left: 9px; top: 38px; border: 13px solid transparent; border-top-color: #fff; border-bottom: 0; }
.list { height: 87px; border: 1px solid #5a5a5a; border-right: 0; padding-left: 13px; }
.util { margin-top: 17px; }
.list h5 { font-size: 16.500px; line-height: 18px; margin-top: 4px; margin-bottom: 6px; }
.opt { display: flex; align-items: center; height: 22px; margin-bottom: 8px; }
.opt i { width: 17px; height: 17px; border: 1px solid #777; margin-right: 7px; flex: none; }
.opt span { font-size: 16.500px; line-height: 22px; height: 22px; width: 241px; padding-left: 1px; white-space: nowrap; }
.loc .opt span { background: #393939; padding-left: 0; font-size: 16.700px; line-height: 21px; }
.loc { margin-top: 18px; height: 92px; background: #000; }
.loc h5 { margin-bottom: 7px; }
.thumb { position: absolute; right: 5px; top: 25px; width: 9px; height: 22px; background: #8a8886; border: 1px solid #666; border-right: 0; }
.rate { margin-top: 10px; height: 99px; background: #000; border: 1px solid #5a5a5a; border-right: 0; padding-left: 13px; }
.rate h4 { margin-top: 3px; }
.rate .inputs { margin-top: 7px; }

.filters { width: 41px; margin-left: 4px; background: #393939; color: #fff; display: flex; flex-direction: column; align-items: center; padding-top: 15px; }
.filters .fun { margin: 19px 0 0 4px; }
.filters span { writing-mode: vertical-rl; font: 700 17px/22px "Open Sans", sans-serif; margin-top: 10px; }

.pages { height: 44px; display: flex; background: #f3f2f1; }
.ic { margin-top: 7px; }
.desk { margin: 8px 0 0 13px; width: 30px; height: 30px; border-bottom: 3px solid #117865; padding-left: 1px; border-radius: 1px; }
.phone { margin: 6px 0 0 31px; }
.prev { margin: 15px 0 0 25px; } .next { margin: 15px 0 0 22px; }
.tab { margin-left: 7px; width: 94px; background: #fff; border-left: 1px solid #aaa; border-bottom: 5px solid #117865; font: 14.500px/44px "Open Sans", sans-serif; letter-spacing: -.35px; text-align: center; height: 44px; padding-left: 1px; }
.plus { width: 50px; background: #117865; border-left: 1px solid #ccc; display: flex; align-items: center; justify-content: center; padding: 0 2px 3px 0; }

.perf { width: 44px; border-left: 1px solid #dcdad8; border-right: 1px solid #dcdad8; padding-top: 16px; display: flex; flex-direction: column; align-items: center; }
.perf span { writing-mode: vertical-rl; font: 600 18.300px/24px "Open Sans", sans-serif; letter-spacing: .05px; margin: 18px 4px 0 0; white-space: nowrap; }

.viz, .data { font-family: "Open Sans", sans-serif; font-size: 14.500px; letter-spacing: -.25px; }
.viz { width: 226px; border-right: 1px solid #dcdad8; }
.viz header, .data header { display: flex; justify-content: space-between; align-items: center; height: 24px; margin-top: 13px; padding: 0 10px 0 10px; }
.viz h2, .data h2 { font-size: 19px; font-weight: 600; letter-spacing: -.25px; line-height: 24px; }
.data h2 { letter-spacing: -.5px; }
.viz h3 { font-size: 14.500px; font-weight: 600; letter-spacing: -.3px; line-height: 20px; margin: 11px 0 0 10px; }
.modes { display: flex; margin: 4px 0 0 10px; height: 40px; align-items: center; }
.mode { width: 40px; height: 40px; background: #d2d0ce; border-radius: 3px; display: flex; align-items: center; justify-content: center; margin-right: 51px; }
.modes > svg:last-child { margin-left: 51px; }
.notch { margin-top: 5px; }
.icons { display: grid; grid-template-columns: repeat(6, 35px); grid-auto-rows: 35px; margin: 14px 0 0 14px; }
.icons svg { width: 23px; height: 23px; }
.icons .sel { outline: 1px solid #222; outline-offset: 3px; }
.b { fill: #85bdec; stroke: #1765ab; stroke-width: 1.300px; }
.g { fill: #c8c6c4; stroke: #8a8886; stroke-width: 1.300px; }
.w { fill: #fafafa; stroke: #666; stroke-width: 1.300px; }
.l { fill: none; stroke-width: 1.400px; }
.ax { fill: none; stroke: #333; stroke-width: 1.500px; }
.more { display: flex; gap: 6px; margin: 7px 0 0 16px; height: 3px; }
.more i { width: 2px; height: 2px; background: #333; }
.wells { border-top: 1px solid #dcdad8; margin-top: 24px; padding: 10px 7px 0 5px; }
.wells label { display: block; padding-left: 10px; line-height: 20px; }
.well { margin-top: 7px; height: 45px; border: 1px dashed #bbb; background: #fff; padding: 4px 3px; border-radius: 2px; }
.pill { height: 28px; border: 1px solid #b8b6b4; border-radius: 2px; background: #e9e8e7; display: flex; align-items: center; padding: 0 4px 0 5px; gap: 8px; line-height: 25px; }
.pill span { flex: 1; height: 26px; }
.wells .drill { margin: 12px 0 12px; font-weight: 600; color: #484644; font-size: 14px; }
.row { display: flex; justify-content: space-between; align-items: center; height: 20px; margin-bottom: 14px; padding: 0 20px 0 10px; }
.toggle { width: 40px; height: 20px; border-radius: 10px; background: #117865; color: #fff; font-size: 11.500px; display: flex; align-items: center; justify-content: space-between; padding: 0 6px; line-height: 20px; }
.toggle i { width: 10px; height: 10px; border-radius: 5px; background: #fff; }
.add { height: 32px; border: 1px dashed #bbb; background: #fff; line-height: 30px; padding-left: 10px; letter-spacing: -.1px; border-radius: 2px; white-space: nowrap; }

.data { flex: 1; }
.data header { padding: 0 6px 0 10px; }
.search { margin: 20px 2px 0 6px; height: 30px; border: 1px solid #c8c6c4; border-bottom-color: #605e5c; border-radius: 4px; background: #fff; display: flex; align-items: center; padding-left: 14px; gap: 9px; font-size: 15.500px; color: #666; letter-spacing: 0; }
.tree { list-style: none; margin: 11px 0 0 -1px; }
.tree li { display: flex; align-items: center; height: 30px; white-space: nowrap; color: #333; position: relative; }
.cr { margin: 0 8px 0 20px; }
.cd { margin: 0 5px 0 17px; }
.tree .t span { margin-left: 7px; }
.badge { position: absolute; left: 44px; top: 14px; }
.f i { width: 15px; height: 15px; border: 1px solid #8a8886; border-radius: 2px; margin: 0 10px 0 55px; background: #faf9f8; flex: none; }
.f i.on { background: #117865; border-color: #117865; }
.f span { margin-left: 7px; }
```
